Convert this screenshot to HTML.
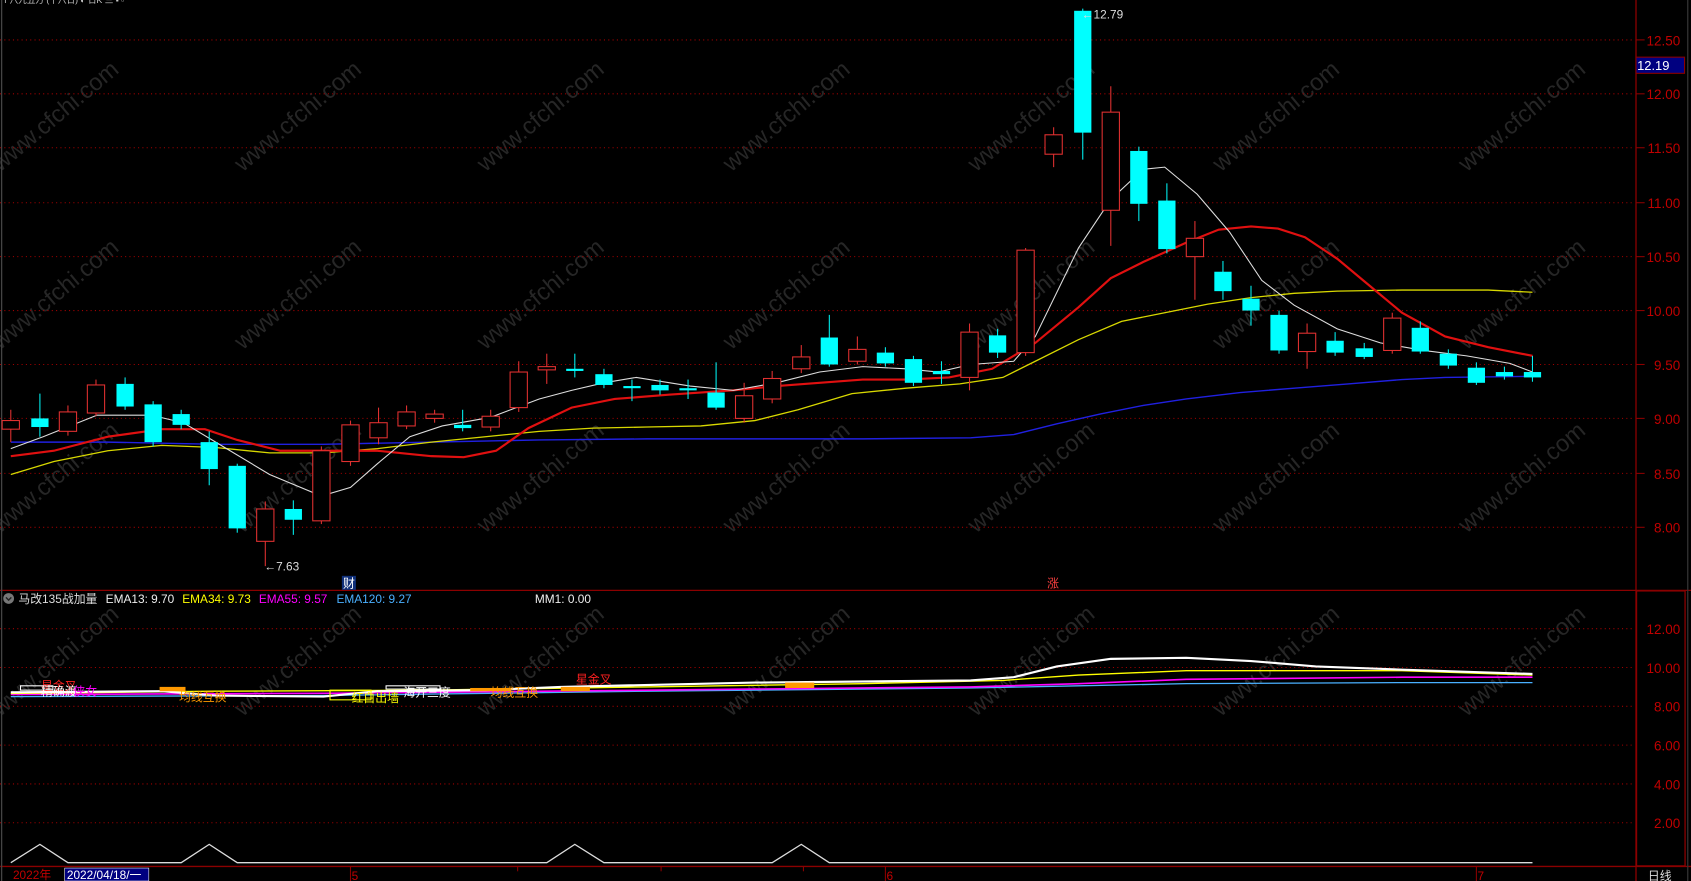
<!DOCTYPE html>
<html><head><meta charset="utf-8"><style>
html,body{margin:0;padding:0;background:#000;overflow:hidden}
svg{display:block}
text{font-family:"Liberation Sans","Noto Sans CJK SC",sans-serif}
</style></head><body>
<svg width="1691" height="881" viewBox="0 0 1568 817" preserveAspectRatio="none" xmlns="http://www.w3.org/2000/svg">
<rect width="1568" height="817" fill="#000"/>
<!-- watermarks -->
<g fill="#2b2b2b" font-size="22" opacity="0.9">
<text transform="translate(0,160) rotate(-40)">www.cfchi.com</text>
<text transform="translate(225,160) rotate(-40)">www.cfchi.com</text>
<text transform="translate(450,160) rotate(-40)">www.cfchi.com</text>
<text transform="translate(678,160) rotate(-40)">www.cfchi.com</text>
<text transform="translate(905,160) rotate(-40)">www.cfchi.com</text>
<text transform="translate(1132,160) rotate(-40)">www.cfchi.com</text>
<text transform="translate(1360,160) rotate(-40)">www.cfchi.com</text>
<text transform="translate(0,325) rotate(-40)">www.cfchi.com</text>
<text transform="translate(225,325) rotate(-40)">www.cfchi.com</text>
<text transform="translate(450,325) rotate(-40)">www.cfchi.com</text>
<text transform="translate(678,325) rotate(-40)">www.cfchi.com</text>
<text transform="translate(905,325) rotate(-40)">www.cfchi.com</text>
<text transform="translate(1132,325) rotate(-40)">www.cfchi.com</text>
<text transform="translate(1360,325) rotate(-40)">www.cfchi.com</text>
<text transform="translate(0,495) rotate(-40)">www.cfchi.com</text>
<text transform="translate(225,495) rotate(-40)">www.cfchi.com</text>
<text transform="translate(450,495) rotate(-40)">www.cfchi.com</text>
<text transform="translate(678,495) rotate(-40)">www.cfchi.com</text>
<text transform="translate(905,495) rotate(-40)">www.cfchi.com</text>
<text transform="translate(1132,495) rotate(-40)">www.cfchi.com</text>
<text transform="translate(1360,495) rotate(-40)">www.cfchi.com</text>
<text transform="translate(0,665) rotate(-40)">www.cfchi.com</text>
<text transform="translate(225,665) rotate(-40)">www.cfchi.com</text>
<text transform="translate(450,665) rotate(-40)">www.cfchi.com</text>
<text transform="translate(678,665) rotate(-40)">www.cfchi.com</text>
<text transform="translate(905,665) rotate(-40)">www.cfchi.com</text>
<text transform="translate(1132,665) rotate(-40)">www.cfchi.com</text>
<text transform="translate(1360,665) rotate(-40)">www.cfchi.com</text>
</g>
<!-- grid main -->
<g stroke="#a00000" stroke-dasharray="1,3" stroke-width="1">
<line x1="0" y1="37" x2="1515" y2="37"/><line x1="0" y1="87" x2="1515" y2="87"/>
<line x1="0" y1="137" x2="1515" y2="137"/><line x1="0" y1="188" x2="1515" y2="188"/>
<line x1="0" y1="238" x2="1515" y2="238"/><line x1="0" y1="288" x2="1515" y2="288"/>
<line x1="0" y1="338" x2="1515" y2="338"/><line x1="0" y1="388" x2="1515" y2="388"/>
<line x1="0" y1="439" x2="1515" y2="439"/><line x1="0" y1="489" x2="1515" y2="489"/>
<line x1="0" y1="583" x2="1515" y2="583"/><line x1="0" y1="619" x2="1515" y2="619"/>
<line x1="0" y1="655" x2="1515" y2="655"/><line x1="0" y1="691" x2="1515" y2="691"/>
<line x1="0" y1="727" x2="1515" y2="727"/><line x1="0" y1="763" x2="1515" y2="763"/>
</g>
<!-- frame -->
<g stroke="#8b0000" stroke-width="1.2" fill="none">
<line x1="1517" y1="0" x2="1517" y2="817"/>
<line x1="0" y1="547.5" x2="1568" y2="547.5"/>
<line x1="0" y1="803.5" x2="1568" y2="803.5"/>
<rect x="1517.5" y="548" width="45" height="255"/>
<line x1="1.5" y1="0" x2="1.5" y2="817" stroke="#444"/>
<line x1="1565" y1="0" x2="1565" y2="817" stroke="#333"/>
</g>
<!-- axis ticks -->
<g stroke="#8b0000"><line x1="1517" y1="37" x2="1525" y2="37"/><line x1="1517" y1="87" x2="1525" y2="87"/><line x1="1517" y1="137" x2="1525" y2="137"/><line x1="1517" y1="188" x2="1525" y2="188"/><line x1="1517" y1="238" x2="1525" y2="238"/><line x1="1517" y1="288" x2="1525" y2="288"/><line x1="1517" y1="338" x2="1525" y2="338"/><line x1="1517" y1="388" x2="1525" y2="388"/><line x1="1517" y1="439" x2="1525" y2="439"/><line x1="1517" y1="489" x2="1525" y2="489"/></g>
<g fill="#c00000" font-size="12.5" text-anchor="end">
<text x="1558" y="42">12.50</text><text x="1558" y="92">12.00</text><text x="1558" y="142">11.50</text>
<text x="1558" y="193">11.00</text><text x="1558" y="243">10.50</text><text x="1558" y="293">10.00</text>
<text x="1558" y="343">9.50</text><text x="1558" y="393">9.00</text><text x="1558" y="444">8.50</text>
<text x="1558" y="494">8.00</text>
<text x="1558" y="588">12.00</text><text x="1558" y="624">10.00</text><text x="1558" y="660">8.00</text>
<text x="1558" y="696">6.00</text><text x="1558" y="732">4.00</text><text x="1558" y="768">2.00</text>
</g>
<rect x="1517" y="53" width="45" height="15" fill="#000080" stroke="#8b0000"/>
<text x="1518" y="65" fill="#fff" font-size="12">12.19</text>
<!-- MA lines -->
<polyline fill="none" stroke="#2020e0" stroke-width="1.3" points="10,410 100,410 200,412 300,412 400,410 500,408 600,407 700,407 800,407 900,406 940,403 980,393 1020,384 1060,376 1100,370 1150,364 1200,360 1250,356 1300,352 1340,350 1421,349"/>
<polyline fill="none" stroke="#d8d800" stroke-width="1.2" points="10,440 50,428 100,418 150,413 200,415 250,420 300,420 350,416 400,410 450,405 500,400 550,397 600,396 650,395 700,390 740,380 790,365 840,360 890,356 930,350 960,335 1000,315 1040,298 1080,290 1120,282 1160,276 1200,272 1240,270 1300,269 1380,269 1421,271"/>
<polyline fill="none" stroke="#e01010" stroke-width="2" points="10,423 50,418 100,405 150,398 190,398 220,408 260,418 300,418 350,418 400,423 430,424 460,418 490,397 530,378 570,370 620,366 680,362 720,358 760,355 800,352 840,352 880,350 920,342 960,318 1000,285 1030,258 1060,243 1100,225 1130,213 1160,210 1185,212 1210,220 1240,240 1270,265 1300,290 1340,312 1380,322 1421,330"/>
<polyline fill="none" stroke="#ddd" stroke-width="1" points="10,416 40,405 90,385 140,385 170,392 200,410 250,440 298,460 325,452 350,430 380,405 410,395 455,387 500,370 530,362 560,355 590,350 640,358 680,362 720,355 760,345 800,340 840,342 870,345 900,338 940,335 960,312 1000,230 1030,185 1060,157 1080,155 1110,180 1140,215 1170,260 1200,283 1240,305 1280,318 1320,325 1360,330 1400,337 1421,345"/>
<!-- candles: wicks -->
<g stroke="#e03030" stroke-width="1">
<line x1="10" y1="380" x2="10" y2="410"/><line x1="63" y1="376" x2="63" y2="404"/><line x1="89" y1="352" x2="89" y2="386"/>
<line x1="246" y1="465" x2="246" y2="525"/><line x1="298" y1="414" x2="298" y2="486"/><line x1="325" y1="390" x2="325" y2="432"/>
<line x1="351" y1="378" x2="351" y2="412"/><line x1="377" y1="376" x2="377" y2="398"/><line x1="403" y1="380" x2="403" y2="392"/>
<line x1="455" y1="380" x2="455" y2="400"/><line x1="481" y1="335" x2="481" y2="382"/><line x1="507" y1="328" x2="507" y2="356"/>
<line x1="690" y1="355" x2="690" y2="392"/><line x1="716" y1="344" x2="716" y2="374"/><line x1="743" y1="320" x2="743" y2="346"/>
<line x1="795" y1="312" x2="795" y2="338"/><line x1="899" y1="300" x2="899" y2="362"/><line x1="951" y1="230" x2="951" y2="330"/>
<line x1="977" y1="118" x2="977" y2="155"/><line x1="1030" y1="80" x2="1030" y2="228"/><line x1="1108" y1="205" x2="1108" y2="278"/>
<line x1="1212" y1="300" x2="1212" y2="342"/><line x1="1291" y1="290" x2="1291" y2="328"/>
</g>
<g stroke="#00f0f0" stroke-width="1">
<line x1="37" y1="365" x2="37" y2="405"/><line x1="116" y1="350" x2="116" y2="380"/><line x1="142" y1="372" x2="142" y2="414"/>
<line x1="168" y1="380" x2="168" y2="398"/><line x1="194" y1="400" x2="194" y2="450"/><line x1="220" y1="430" x2="220" y2="494"/>
<line x1="272" y1="464" x2="272" y2="496"/><line x1="429" y1="380" x2="429" y2="400"/><line x1="533" y1="328" x2="533" y2="350"/>
<line x1="560" y1="342" x2="560" y2="360"/><line x1="586" y1="352" x2="586" y2="372"/><line x1="612" y1="352" x2="612" y2="366"/>
<line x1="638" y1="352" x2="638" y2="370"/><line x1="664" y1="336" x2="664" y2="380"/><line x1="769" y1="292" x2="769" y2="340"/>
<line x1="821" y1="322" x2="821" y2="340"/><line x1="847" y1="330" x2="847" y2="358"/><line x1="873" y1="335" x2="873" y2="356"/>
<line x1="925" y1="305" x2="925" y2="332"/><line x1="1004" y1="8" x2="1004" y2="148"/><line x1="1056" y1="136" x2="1056" y2="205"/>
<line x1="1082" y1="170" x2="1082" y2="235"/><line x1="1134" y1="242" x2="1134" y2="278"/><line x1="1160" y1="265" x2="1160" y2="302"/>
<line x1="1186" y1="288" x2="1186" y2="328"/><line x1="1238" y1="308" x2="1238" y2="330"/><line x1="1265" y1="318" x2="1265" y2="333"/>
<line x1="1317" y1="298" x2="1317" y2="328"/><line x1="1343" y1="324" x2="1343" y2="342"/><line x1="1369" y1="336" x2="1369" y2="357"/>
<line x1="1395" y1="340" x2="1395" y2="352"/><line x1="1421" y1="330" x2="1421" y2="354"/>
</g>
<!-- up candles (hollow red) -->
<g fill="#000" stroke="#e03030" stroke-width="1">
<rect x="2" y="390" width="16" height="8"/><rect x="55" y="382" width="16" height="18"/><rect x="81" y="357" width="16" height="26"/>
<rect x="238" y="472" width="16" height="30"/><rect x="290" y="418" width="16" height="65"/><rect x="317" y="394" width="16" height="34"/>
<rect x="343" y="392" width="16" height="14"/><rect x="369" y="382" width="16" height="13"/><rect x="395" y="384" width="16" height="4"/>
<rect x="447" y="386" width="16" height="10"/><rect x="473" y="345" width="16" height="33"/><rect x="499" y="340" width="16" height="3"/>
<rect x="682" y="367" width="16" height="21"/><rect x="708" y="351" width="16" height="19"/><rect x="735" y="331" width="16" height="11"/>
<rect x="787" y="324" width="16" height="11"/><rect x="891" y="308" width="16" height="42"/><rect x="943" y="232" width="16" height="95"/>
<rect x="969" y="125" width="16" height="18"/><rect x="1022" y="104" width="16" height="91"/><rect x="1100" y="221" width="16" height="17"/>
<rect x="1204" y="309" width="16" height="17"/><rect x="1283" y="295" width="16" height="30"/>
</g>
<!-- down candles (cyan) -->
<g fill="#00ffff">
<rect x="29" y="388" width="16" height="8"/><rect x="108" y="356" width="16" height="21"/><rect x="134" y="375" width="16" height="35"/>
<rect x="160" y="384" width="16" height="10"/><rect x="186" y="410" width="16" height="25"/><rect x="212" y="432" width="16" height="58"/>
<rect x="264" y="472" width="16" height="10"/><rect x="421" y="394" width="16" height="3"/><rect x="525" y="342" width="16" height="2"/>
<rect x="552" y="347" width="16" height="10"/><rect x="578" y="358" width="16" height="2"/><rect x="604" y="357" width="16" height="5"/>
<rect x="630" y="360" width="16" height="2"/><rect x="656" y="364" width="16" height="14"/><rect x="761" y="313" width="16" height="25"/>
<rect x="813" y="327" width="16" height="10"/><rect x="839" y="333" width="16" height="22"/><rect x="865" y="344" width="16" height="3"/>
<rect x="917" y="311" width="16" height="16"/><rect x="996" y="10" width="16" height="113"/><rect x="1048" y="140" width="16" height="49"/>
<rect x="1074" y="186" width="16" height="45"/><rect x="1126" y="252" width="16" height="18"/><rect x="1152" y="277" width="16" height="11"/>
<rect x="1178" y="292" width="16" height="33"/><rect x="1230" y="316" width="16" height="11"/><rect x="1257" y="323" width="16" height="8"/>
<rect x="1309" y="304" width="16" height="22"/><rect x="1335" y="328" width="16" height="11"/><rect x="1361" y="341" width="16" height="14"/>
<rect x="1387" y="345" width="16" height="4"/><rect x="1413" y="345" width="16" height="5"/>
</g>
<!-- labels -->
<text x="245" y="529" fill="#ddd" font-size="11">←7.63</text>
<text x="1003" y="17" fill="#ddd" font-size="11">←12.79</text>
<rect x="317" y="534" width="13" height="13" fill="#10307a"/>
<text x="318" y="545" fill="#fff" font-size="11">财</text>
<text x="971" y="545" fill="#ff4040" font-size="11">涨</text>
<text x="4" y="3" fill="#ccc" font-size="8">r 八九五万 (十八日) ◐ 日K 三 ▪ ▫</text>
<!-- legend -->
<circle cx="8" cy="555" r="5" fill="#777"/>
<path d="M5.5 554 L8 556.5 L10.5 554" stroke="#222" fill="none" stroke-width="1.3"/>
<g font-size="11">
<text x="17" y="559" fill="#ddd">马改135战加量</text>
<text x="98" y="559" fill="#eee">EMA13: 9.70</text>
<text x="169" y="559" fill="#ffff00">EMA34: 9.73</text>
<text x="240" y="559" fill="#ff00ff">EMA55: 9.57</text>
<text x="312" y="559" fill="#4ab0ff">EMA120: 9.27</text>
<text x="496" y="559" fill="#eee">MM1: 0.00</text>
</g>
<!-- lower panel lines -->
<polyline fill="none" stroke="#4ab0ff" stroke-width="1.2" points="10,646 300,645 600,641 900,638 1000,636 1100,634 1300,633 1421,633"/>
<polyline fill="none" stroke="#ff00ff" stroke-width="1.5" points="10,644 300,643 600,640 900,637 1000,634 1100,630 1300,628 1421,628"/>
<polyline fill="none" stroke="#ffff00" stroke-width="1.3" points="10,643 200,641 400,640 600,637 800,634 930,631 1000,626 1100,622 1300,622 1421,626"/>
<polyline fill="none" stroke="#fff" stroke-width="2" points="10,642 150,641 200,645 300,646 350,641 450,640 520,637 700,633 900,631 940,628 980,618 1030,611 1100,610 1160,613 1220,618 1300,621 1421,625"/>
<g stroke="#fff" fill="none"><rect x="19" y="636" width="30" height="4"/><rect x="306" y="640" width="38" height="9" stroke="#ff0"/><rect x="358" y="636" width="50" height="3"/></g>
<g fill="#ff9900"><rect x="148" y="637" width="24" height="4"/><rect x="520" y="637" width="27" height="4"/><rect x="728" y="633" width="27" height="5"/><rect x="436" y="638" width="38" height="3"/></g>
<g font-size="11">
<text x="38" y="640" fill="#ff2020">星金叉</text>
<text x="38" y="645" fill="#fff">精确渡</text>
<text x="68" y="645" fill="#ff00ff">侠女</text>
<text x="166" y="650" fill="#ff9900">均线互换</text>
<text x="326" y="651" fill="#ff0">红白出墙</text>
<text x="374" y="646" fill="#fff">海开三度</text>
<text x="455" y="646" fill="#ff9900">均线互换</text>
<text x="534" y="634" fill="#ff2020">星金叉</text>
</g>
<!-- zigzag -->
<polyline fill="none" stroke="#ddd" stroke-width="1.2" points="10,800 37,783 63,800 168,800 194,783 220,800 507,800 533,783 560,800 716,800 743,783 769,800 1421,800"/>
<!-- time axis -->
<text x="12" y="815" fill="#c00000" font-size="11">2022年</text>
<rect x="60" y="805" width="78" height="12" fill="#000080" stroke="#fff" stroke-width="0.5"/>
<text x="62" y="815" fill="#fff" font-size="11">2022/04/18/一</text>
<g stroke="#8b0000"><line x1="325" y1="804" x2="325" y2="817"/><line x1="821" y1="804" x2="821" y2="817"/><line x1="1369" y1="804" x2="1369" y2="817"/><line x1="480" y1="804" x2="480" y2="808"/><line x1="613" y1="804" x2="613" y2="808"/><line x1="745" y1="804" x2="745" y2="808"/></g>
<text x="326" y="816" fill="#c00000" font-size="11">5</text>
<text x="822" y="816" fill="#c00000" font-size="11">6</text>
<text x="1370" y="816" fill="#c00000" font-size="11">7</text>
<text x="1528" y="816" fill="#ddd" font-size="11">日线</text>
</svg>
</body></html>
